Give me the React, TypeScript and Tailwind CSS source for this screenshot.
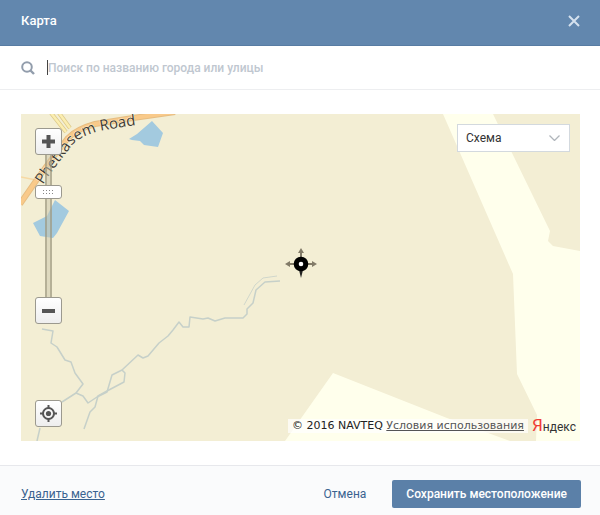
import { useState } from 'react';

const MAP_TYPES = ['Схема', 'Спутник', 'Гибрид'];

function MapCanvas() {
  return (
    <svg viewBox="0 0 559 327" className="block w-full" role="img" aria-label="Карта местности">
      <rect width="559" height="327" fill="#f3eed4" />
      <g fill="#ffffec">
        <path d="M422 0 492 160 496 260 516 301 515 327H559V137L532 132 527 127 529 117 472 0Z" />
        <path d="M264 327 312 259 426 304 489 327Z" />
      </g>

      <g fill="#a3cadf">
        <path d="M108 25 116 20 131 7 142 19 137 33 123 31 119 27 111 26Z" />
        <path d="M12 109 26 102 34 86 48 97 36 119 32 124 19 122Z" />
      </g>

      <g fill="none" stroke="#c6d0c9" strokeWidth="1.5" strokeLinejoin="round">
        <path d="M21 215 32 217 30 229 36 233 44 246 50 248 54 259 62 270 55 279 41 288" />
        <path d="M55 279 62 282 67 289 76 283 86 278 91 261 101 256 117 241 122 244 127 242 138 229 147 222 152 216 158 208 162 213H168L169 203 182 205 187 204 194 207 204 204H222L226 200V195L232 189 235 176 244 168 259 167" />
        <path d="M101 256 104 259 103 268 86 277 77 282 74 293 69 298 63 315" />
        <path d="M19 314 16 327" />
        <path d="M223 191 234 171 242 164 256 162" strokeWidth="0.8" />
      </g>

      <g fill="none">
        <path d="M0 63 15 66" stroke="#f7d9a4" strokeWidth="1.5" />
        <path d="M30-1 45 18M38-1 49 14" stroke="#dcc98a" strokeWidth="4" />
        <path d="M30-1 45 18M38-1 49 14" stroke="#fbeeb0" strokeWidth="2.5" />
        <path d="M-1 90 17 64 33 42 47 24Q56 15 74 10L112 4 154-2" stroke="#e6bd82" strokeWidth="6" />
        <path d="M-1 90 17 64 33 42 47 24Q56 15 74 10L112 4 154-2" stroke="#f9ca8a" strokeWidth="4" />
      </g>

      <path id="road-label" d="M22 71C31 56 41 45 48 35S65 21 78 17L108 12 140 8" fill="none" />
      <text
        className="font-['Open_Sans',sans-serif] text-[15px]"
        fill="#3f3a33"
        stroke="#f8f1d6"
        strokeWidth="1"
        paintOrder="stroke"
      >
        <textPath href="#road-label">Phetkasem Road</textPath>
      </text>

      <g stroke="#827b68" strokeWidth="2">
        <path d="M280 150V137M280 150H267M280 150H293" />
      </g>
      <path d="M280 134 283 139H277ZM264 150 269 147V153ZM296 150 291 147V153Z" fill="#827b68" />
      <path d="M278 156H282L280 164Z" fill="#222" />
      <circle cx="280" cy="150" r="4.8" fill="#fff" stroke="#000" strokeWidth="5" />
    </svg>
  );
}

const mapButton =
  'flex h-[27px] w-[27px] items-center justify-center rounded-[3px] border border-[#9b998f] bg-linear-to-b from-white to-[#eeeeee] text-[#555]';

function ZoomControl() {
  const [zoom, setZoom] = useState(13);

  return (
    <div className="flex flex-col items-center">
      <button className={mapButton} aria-label="Приблизить" onClick={() => setZoom(Math.min(17, zoom + 1))}>
        <svg width="13" height="13" viewBox="0 0 13 13" fill="currentColor">
          <path d="M4.5 0h4v4.5H13v4H8.5V13h-4V8.500H0v-4h4.500z" />
        </svg>
      </button>
      <div className="relative flex h-[142px] w-[27px] justify-center">
        <div className="w-[7px] border-x-2 border-[#8c8870]/50 bg-[#c9c4aa]/50" />
        <input
          type="range"
          aria-label="Масштаб"
          min={0}
          max={17}
          value={zoom}
          onChange={(e) => setZoom(Number(e.target.value))}
          className="absolute inset-0 h-full w-full appearance-none bg-transparent [direction:rtl] [writing-mode:vertical-lr] [&::-webkit-slider-thumb]:h-[14px] [&::-webkit-slider-thumb]:w-[27px] [&::-webkit-slider-thumb]:appearance-none [&::-webkit-slider-thumb]:rounded-[3px] [&::-webkit-slider-thumb]:border [&::-webkit-slider-thumb]:border-[#9b998f] [&::-webkit-slider-thumb]:[background:repeating-linear-gradient(90deg,#888_0px,#888_1px,transparent_1px,transparent_3px)_7px_4px/11px_1px_no-repeat,repeating-linear-gradient(90deg,#888_0px,#888_1px,transparent_1px,transparent_3px)_7px_7px/11px_1px_no-repeat,white]"
        />
      </div>
      <button className={mapButton} aria-label="Отдалить" onClick={() => setZoom(Math.max(0, zoom - 1))}>
        <svg width="13" height="4" viewBox="0 0 13 4" fill="currentColor">
          <path d="M0 0h13v4H0z" />
        </svg>
      </button>
    </div>
  );
}

export default function App() {
  const [query, setQuery] = useState('');
  const [mapType, setMapType] = useState(MAP_TYPES[0]);

  return (
    <div className="min-h-screen bg-white font-[Roboto,sans-serif] text-xs leading-4">
      <header className="flex h-[46px] items-center justify-between border-b border-[#587ca3] bg-[#6287ae] pr-5 pl-[21px] pb-1 text-white">
        <h1 className="text-[13px] font-medium">Карта</h1>
        <button aria-label="Закрыть" className="text-[#d5e1ee]">
          <svg width="12" height="12" viewBox="0 0 12 12" fill="none" stroke="currentColor" strokeWidth="2">
            <path d="M1 1l10 10M11 1 1 11" />
          </svg>
        </button>
      </header>

      <div className="flex h-11 items-center border-b border-[#edeef0] px-[21px]">
        <svg width="14" height="14" viewBox="0 0 14 14" fill="none" stroke="#929dac" strokeWidth="2" className="mr-3">
          <circle cx="6" cy="6" r="4.8" />
          <path d="M9.5 9.5 13 13" strokeWidth="2.4" />
        </svg>
        <span className="h-[15px] w-px bg-[#444]" />
        <input
          type="text"
          aria-label="Поиск по названию города или улицы"
          placeholder="Поиск по названию города или улицы"
          value={query}
          onChange={(e) => setQuery(e.target.value)}
          className="flex-1 bg-transparent caret-[#444] outline-none placeholder:font-medium placeholder:text-[#c0c7d0]"
        />
      </div>

      <main className="pt-6 pr-5 pb-6 pl-[21px]">
        <div className="relative">
          <MapCanvas />
          <div className="absolute top-3.5 left-3.5">
            <ZoomControl />
          </div>
          <div className="absolute bottom-3.5 left-3.5">
            <button className={mapButton} aria-label="Моё местоположение">
              <svg width="17" height="17" viewBox="0 0 17 17" fill="none" stroke="currentColor" strokeWidth="2">
                <circle cx="8.5" cy="8.5" r="5.5" />
                <circle cx="8.5" cy="8.5" r="2.6" fill="currentColor" stroke="none" />
                <path d="M8.5 0v4M8.5 13v4M0 8.5h4M13 8.5h4" />
              </svg>
            </button>
          </div>
          <div className="absolute top-2.5 right-2.5 flex items-center">
            <select
              aria-label="Тип карты"
              value={mapType}
              onChange={(e) => setMapType(e.target.value)}
              className="h-7 w-[113px] appearance-none border border-[#d3d9de] bg-white pr-6 pl-2 text-[#333]"
            >
              {MAP_TYPES.map((type) => (
                <option key={type}>{type}</option>
              ))}
            </select>
            <svg
              width="11"
              height="6"
              viewBox="0 0 11 6"
              fill="none"
              stroke="#b0b5bb"
              strokeWidth="1.3"
              className="pointer-events-none absolute right-2.5"
            >
              <path d="M.5.5l5 5 5-5" />
            </svg>
          </div>
          <div className="absolute right-1 bottom-1 flex items-center gap-1">
            <p className="bg-white/70 px-1 font-['DejaVu_Sans',sans-serif] text-[11px] leading-[14px] text-[#222]">
              © 2016 NAVTEQ{' '}
              <a href="#terms" className="text-[#555] underline">
                Условия использования
              </a>
            </p>
            <a href="#yandex" className="leading-5 text-[#333]">
              <span className="text-[17px] text-[#f03b35]">Я</span>ндекс
            </a>
          </div>
        </div>
      </main>

      <footer className="flex items-center justify-between border-t border-[#e7e8ec] bg-[#fafbfc] pt-3.5 pr-[19px] pb-2 pl-[21px]">
        <a href="#delete" className="text-[#3a6390] underline">
          Удалить место
        </a>
        <div className="flex items-center gap-2.5">
          <button className="h-7 px-4 text-[#3a6390]">Отмена</button>
          <button className="h-7 rounded-xs bg-[#5b80a8] px-3.5 font-medium text-white">Сохранить местоположение</button>
        </div>
      </footer>
    </div>
  );
}
